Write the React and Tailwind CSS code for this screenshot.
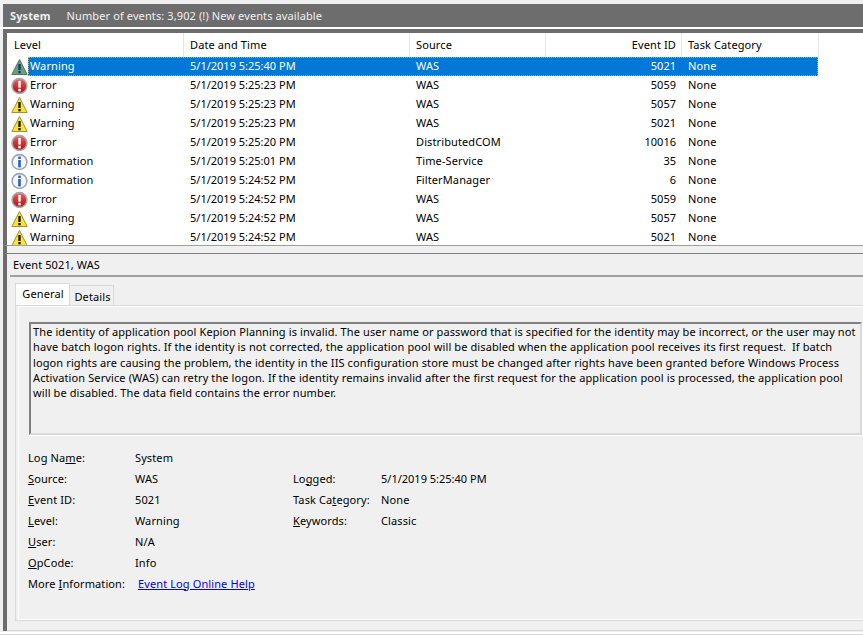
const events = [
  { level: "Warning", date: "5/1/2019 5:25:40 PM", source: "WAS", id: "5021", selected: true },
  { level: "Error", date: "5/1/2019 5:25:23 PM", source: "WAS", id: "5059" },
  { level: "Warning", date: "5/1/2019 5:25:23 PM", source: "WAS", id: "5057" },
  { level: "Warning", date: "5/1/2019 5:25:23 PM", source: "WAS", id: "5021" },
  { level: "Error", date: "5/1/2019 5:25:20 PM", source: "DistributedCOM", id: "10016" },
  { level: "Information", date: "5/1/2019 5:25:01 PM", source: "Time-Service", id: "35" },
  { level: "Information", date: "5/1/2019 5:24:52 PM", source: "FilterManager", id: "6" },
  { level: "Error", date: "5/1/2019 5:24:52 PM", source: "WAS", id: "5059" },
  { level: "Warning", date: "5/1/2019 5:24:52 PM", source: "WAS", id: "5057" },
  { level: "Warning", date: "5/1/2019 5:24:52 PM", source: "WAS", id: "5021" },
];

const message = [
  "The identity of application pool Kepion Planning is invalid. The user name or password that is specified for the identity may be incorrect, or the user may not",
  "have batch logon rights. If the identity is not corrected, the application pool will be disabled when the application pool receives its first request.  If batch",
  "logon rights are causing the problem, the identity in the IIS configuration store must be changed after rights have been granted before Windows Process",
  "Activation Service (WAS) can retry the logon. If the identity remains invalid after the first request for the application pool is processed, the application pool",
  "will be disabled. The data field contains the error number.",
];

function WarningIcon({ selected }) {
  return (
    <svg width="18" height="18" viewBox="0 0 18 18" className="shrink-0">
      <path d="M8.5 1.5 L16.2 16.5 H0.8 Z" fill={selected ? "#6f9c7c" : "#f9e23c"} stroke={selected ? "#4d7a66" : "#a89226"} strokeWidth="1" strokeLinejoin="round" />
      <rect x="7.3" y="6" width="2.4" height="6" fill={selected ? "#0c3f6e" : "#1a1a1a"} />
      <rect x="7.3" y="13" width="2.4" height="2.3" fill={selected ? "#0c3f6e" : "#1a1a1a"} />
    </svg>
  );
}

function ErrorIcon() {
  return (
    <svg width="18" height="18" viewBox="0 0 18 18" className="shrink-0">
      <defs>
        <linearGradient id="errorFill" x1="0" y1="0" x2="0" y2="1">
          <stop offset="0" stopColor="#e86a6a" />
          <stop offset="0.5" stopColor="#d22f2f" />
          <stop offset="1" stopColor="#a81c1c" />
        </linearGradient>
      </defs>
      <circle cx="8.5" cy="9" r="7.4" fill="url(#errorFill)" stroke="#a8a8a8" strokeWidth="1.6" />
      <rect x="7.3" y="3.8" width="2.5" height="6.8" fill="#ffffff" />
      <rect x="7.3" y="11.8" width="2.5" height="2.5" fill="#ffffff" />
    </svg>
  );
}

function InfoIcon() {
  return (
    <svg width="18" height="18" viewBox="0 0 18 18" className="shrink-0">
      <circle cx="8.5" cy="9" r="7.4" fill="#f4f6fa" stroke="#a0a5b0" strokeWidth="1.6" />
      <rect x="7.2" y="3.6" width="2.6" height="2.4" fill="#2a5fc4" />
      <rect x="7.2" y="7" width="2.6" height="7.4" fill="#2a5fc4" />
    </svg>
  );
}

function LevelIcon({ level, selected }) {
  if (level === "Error") return <ErrorIcon />;
  if (level === "Information") return <InfoIcon />;
  return <WarningIcon selected={selected} />;
}

function EventRow({ event }) {
  const rowClass = event.selected
    ? "bg-[#0078d7] text-white outline-1 outline-dotted -outline-offset-1 outline-[#e0a040]"
    : "text-black";
  return (
    <div className="flex h-[19px] shrink-0 items-center">
      <div className="w-[20px] shrink-0 pl-[3px]">
        <LevelIcon level={event.level} selected={event.selected} />
      </div>
      <div className={`flex h-[19px] w-[790px] items-center pb-[1px] ${rowClass}`}>
        <div className="w-[155px] pl-[2px]">{event.level}</div>
        <div className="w-[226px] pl-[7px] tracking-normal">{event.date}</div>
        <div className="w-[136px] pl-[7px]">{event.source}</div>
        <div className="w-[136px] pr-[5px] text-right tracking-normal">{event.id}</div>
        <div className="w-[137px] pl-[7px]">None</div>
      </div>
    </div>
  );
}

function HeaderCell({ className, children }) {
  return <div className={`flex h-full items-center border-r border-[#e5e5e5] pb-[1px] ${className}`}>{children}</div>;
}

function Row({ label, value }) {
  return (
    <>
      <div>{label}</div>
      <div>{value}</div>
    </>
  );
}

export default function App() {
  return (
    <div className="h-[635px] w-[863px] overflow-hidden bg-[#f0f0f0] text-[11px] leading-[16px] tracking-[0.01em] text-black" style={{ fontFamily: '"Noto Sans", sans-serif' }}>
      <div className="h-[4px]" />
      <div className="ml-[3px] flex h-[23px] items-center gap-[16px] bg-[#6d6d6d] pl-[7px]">
        <span className="font-bold text-[#f0f0f0]">System</span>
        <span className="text-[#f0f0f0]">Number of events: 3,902 (!) New events available</span>
      </div>

      <div className="h-[2px] bg-white" />
      <div className="ml-[3px] flex h-[216px] flex-col overflow-hidden border-l-[4px] border-t-[4px] border-l-[#6d6d6d] border-t-[#6d6d6d] bg-white pl-[1px]">
        <div className="flex h-[24px] shrink-0">
          <HeaderCell className="w-[176px] pl-[6px]">Level</HeaderCell>
          <HeaderCell className="w-[226px] pl-[6px]">Date and Time</HeaderCell>
          <HeaderCell className="w-[136px] pl-[6px]">Source</HeaderCell>
          <HeaderCell className="w-[136px] justify-end pr-[5px]">Event ID</HeaderCell>
          <HeaderCell className="w-[137px] pl-[6px]">Task Category</HeaderCell>
        </div>
        {events.map((event, i) => (
          <EventRow key={i} event={event} />
        ))}
      </div>

      <div className="ml-[3px] h-[8px] border-l-[4px] border-t border-l-[#6d6d6d] border-t-[#a0a0a0]" />

      <div className="ml-[3px] flex flex-col border-l-[4px] border-t border-l-[#6d6d6d] border-t-[#808080] pl-[1px]">
        <div className="ml-[2px] flex h-[23px] items-center border-b-[2px] border-[#a0a0a0] pl-[3px]">Event 5021, WAS</div>
        <div className="mt-[6px] flex h-[22px] items-end pl-[7px]">
          <div className="flex h-[22px] w-[55px] items-center justify-center border border-b-0 border-[#d9d9d9] bg-white pb-[1px] pl-[1px]">General</div>
          <div className="flex h-[20px] w-[44px] items-center justify-center border border-b-0 border-l-0 border-[#d9d9d9] bg-[#f0f0f0] pl-[2px] pt-[2px]">Details</div>
        </div>
        <div className="ml-[7px] h-[316px] border border-r-0 border-[#d9d9d9] pl-[2px]">
          <div className="h-full border border-r-0 border-white">
            <div className="ml-[10px] mt-[15px] h-[114px] border-b border-r border-white">
              <div className="h-full border-2 border-b-[#d9d9d9] border-l-[#808080] border-r-[#d9d9d9] border-t-[#808080] pl-[2px]">
                {message.map((line, i) => (
                  <div key={i} className="whitespace-pre leading-[15.25px]">{line}</div>
                ))}
              </div>
            </div>
            <div className="ml-[9px] mt-[11px] grid auto-rows-[21px] grid-cols-[107px_158px_88px_1fr] items-center">
              <Row label={<>Log Na<u>m</u>e:</>} value="System" />
              <div /><div />
              <Row label={<><u>S</u>ource:</>} value="WAS" />
              <Row label={<>Lo<u>g</u>ged:</>} value={<span className="tracking-normal">5/1/2019 5:25:40 PM</span>} />
              <Row label={<><u>E</u>vent ID:</>} value="5021" />
              <Row label={<>Task Ca<u>t</u>egory:</>} value="None" />
              <Row label={<><u>L</u>evel:</>} value="Warning" />
              <Row label={<><u>K</u>eywords:</>} value="Classic" />
              <Row label={<><u>U</u>ser:</>} value="N/A" />
              <div /><div />
              <Row label={<><u>O</u>pCode:</>} value="Info" />
              <div /><div />
              <div className="col-span-4 flex">
                <span className="w-[110px]">More <u>I</u>nformation:</span>
                <a href="#" className="text-[#0000ee] underline">Event Log Online Help</a>
              </div>
            </div>
          </div>
        </div>
        <div className="h-[9px]" />
      </div>
      <div className="ml-[3px] border-l-[4px] border-l-[#6d6d6d]">
        <div className="h-[1px] bg-[#d9d9d9]" />
      </div>
      <div className="h-[1px]" />
      <div className="h-[2px] bg-white" />
      <div className="h-[1px] bg-[#d9d9d9]" />
    </div>
  );
}
